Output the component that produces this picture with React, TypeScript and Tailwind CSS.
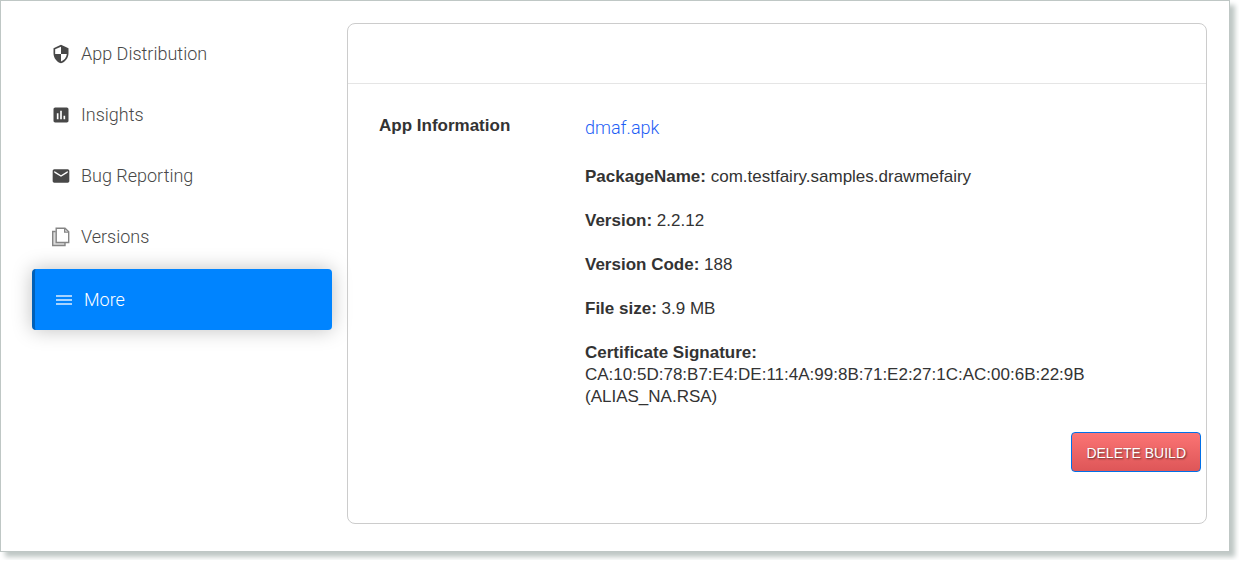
import type { ReactNode } from "react";
import { MdSecurity, MdInsertChart, MdEmail } from "react-icons/md";

function PagesIcon() {
  return (
    <svg viewBox="0 0 20 20" className="size-5" fill="none" stroke="#858585" strokeWidth="1.4" aria-hidden="true">
      <path d="M4.700 4.500H1.700v14h12.300v-3" fill="#dcdcdc" />
      <path d="M5.200 1.200h8.800l3.700 3.600v10.700H5.200z" fill="#fff" />
      <path d="M13.700 1.500v3.600h3.700" />
    </svg>
  );
}

function MenuIcon() {
  return (
    <svg viewBox="0 0 20 20" className="size-5" fill="#a6d3ff" aria-hidden="true">
      <path d="M2 5h16v2H2zM2 9h16v2H2zM2 13h16v2H2z" />
    </svg>
  );
}

type Item = { label: string; icon: ReactNode };

const items: Item[] = [
  { label: "App Distribution", icon: <MdSecurity className="size-5" /> },
  { label: "Insights", icon: <MdInsertChart className="size-5" /> },
  { label: "Bug Reporting", icon: <MdEmail className="size-5" /> },
  { label: "Versions", icon: <PagesIcon /> },
];

const details = [
  ["PackageName:", "com.testfairy.samples.drawmefairy"],
  ["Version:", "2.2.12"],
  ["Version Code:", "188"],
  ["File size:", "3.9 MB"],
];

export default function App() {
  return (
    <div className="bg-white pr-[9px] pb-2 font-['Liberation_Sans',sans-serif] text-[17px] leading-[22px] text-[#333]">
      <div className="flex items-start gap-[15px] border border-[#bfc7c5] pt-[22px] pr-[22px] pb-[27px] pl-[31px] shadow-[5px_5px_5px_#bfc7c5]">
        <nav className="flex w-[300px] shrink-0 flex-col font-['Roboto','Liberation_Sans',sans-serif] text-[18px] font-light">
          {items.map((item) => (
            <a key={item.label} href="#" className="flex h-[61px] items-center gap-[10px] pl-[19px] text-[#484848]">
              {item.icon}
              {item.label}
            </a>
          ))}
          <a
            href="#"
            aria-current="page"
            className="mt-0.5 flex h-[61px] items-center gap-[10px] rounded border-l-3 border-[#0060b8] bg-[#0084ff] pl-[19px] text-white shadow-[0_0_20px_rgba(0,0,0,0.25)]"
          >
            <MenuIcon />
            More
          </a>
        </nav>

        <main className="min-w-0 flex-1 rounded-lg border border-[#ccc] pb-[51px]">
          <div className="h-[60px] border-b border-[#e5e5e5]" />
          <section className="flex pt-[31px] pl-[31px]">
            <h2 className="w-[206px] shrink-0 font-bold">App Information</h2>
            <div className="flex min-w-0 flex-1 flex-col gap-[22px] pt-0.5 pr-[92px]">
              <a href="#" className="mb-[5px] self-start font-['Roboto','Liberation_Sans',sans-serif] text-[18px] font-light text-[#1f5ff5]">
                dmaf.apk
              </a>
              {details.map(([name, value]) => (
                <p key={name}>
                  <strong>{name}</strong> {value}
                </p>
              ))}
              <p>
                <strong>Certificate Signature:</strong>
                <br />
                CA:10:5D:78:B7:E4:DE:11:4A:99:8B:71:E2:27:1C:AC:00:6B:22:9B (ALIAS_NA.RSA)
              </p>
            </div>
          </section>
          <div className="flex justify-end pt-6 pr-[5px]">
            <button
              type="button"
              className="h-10 rounded border border-[#0070e8] bg-linear-to-b from-[#fb7474] to-[#de5658] px-[14px] pt-0.5 text-sm whitespace-nowrap text-white [text-shadow:1px_1px_2px_rgba(0,0,0,0.6)]"
            >
              DELETE BUILD
            </button>
          </div>
        </main>
      </div>
    </div>
  );
}
